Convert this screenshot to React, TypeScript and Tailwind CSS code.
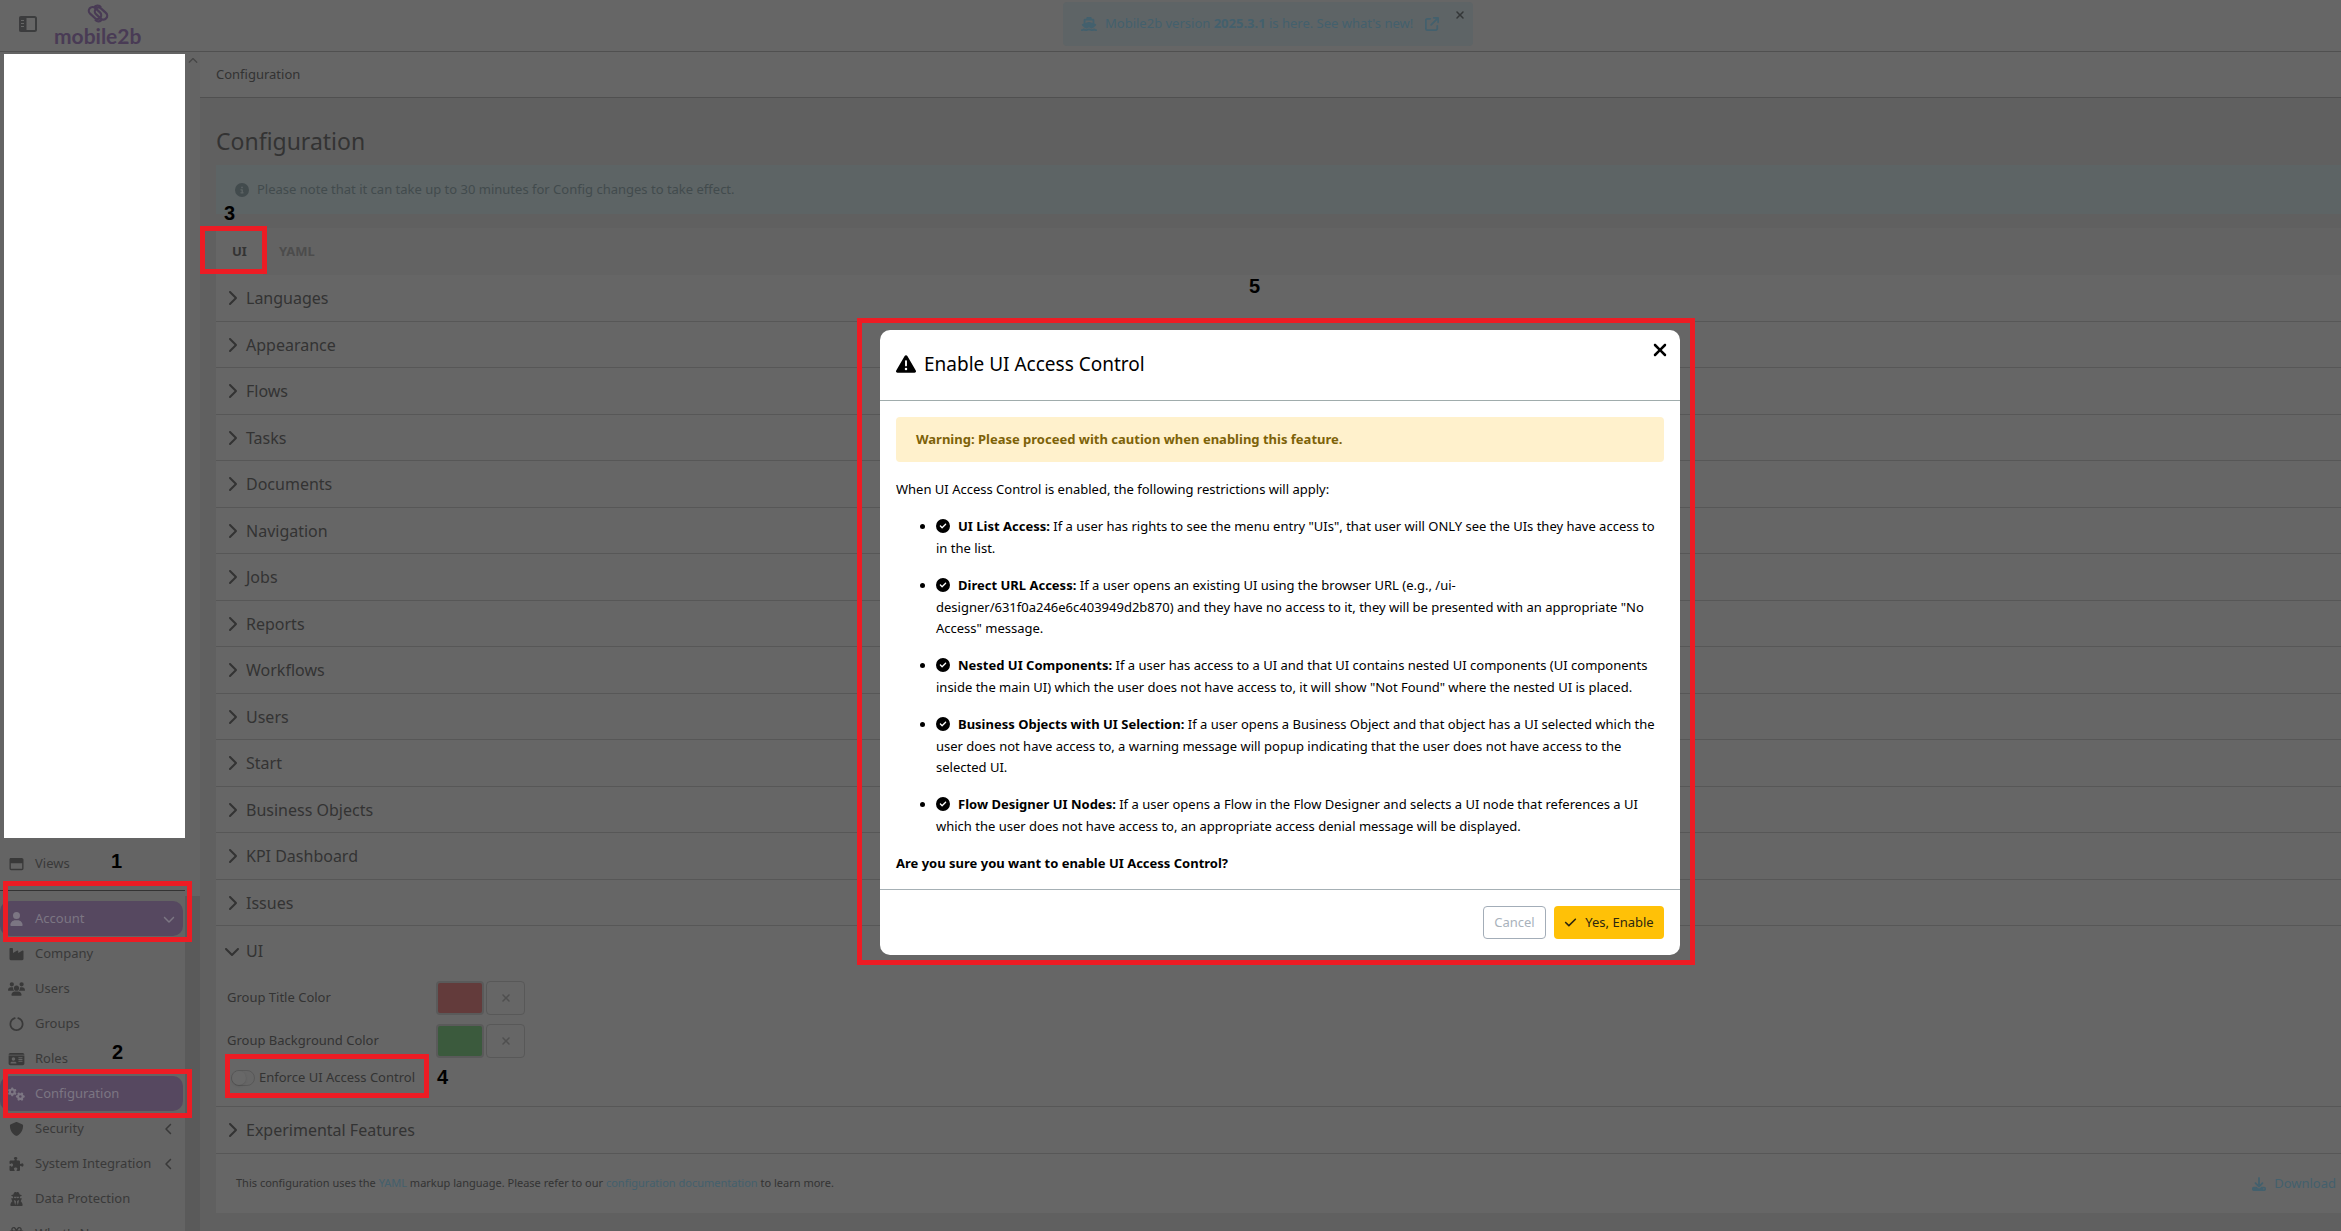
import { FaArrowUpRightFromSquare, FaCheck, FaChevronDown, FaChevronLeft, FaChevronRight, FaChevronUp, FaCircleCheck, FaCircleInfo, FaCircleNotch, FaDownload, FaGears, FaGift, FaIdCard, FaIndustry, FaPuzzlePiece, FaRegWindowMaximize, FaShield, FaShip, FaTriangleExclamation, FaUser, FaUserSecret, FaUsers, FaXmark } from "react-icons/fa6";

const menu = [
  { label: "Company", icon: FaIndustry },
  { label: "Users", icon: FaUsers },
  { label: "Groups", icon: FaCircleNotch },
  { label: "Roles", icon: FaIdCard },
  { label: "Configuration", icon: FaGears, active: true },
  { label: "Security", icon: FaShield, more: true },
  { label: "System Integration", icon: FaPuzzlePiece, more: true },
  { label: "Data Protection", icon: FaUserSecret },
  { label: "What's New", icon: FaGift },
];

const sections = [
  "Languages", "Appearance", "Flows", "Tasks", "Documents", "Navigation", "Jobs",
  "Reports", "Workflows", "Users", "Start", "Business Objects", "KPI Dashboard", "Issues",
];

const restrictions = [
  {
    title: "UI List Access:",
    text: 'If a user has rights to see the menu entry "UIs", that user will ONLY see the UIs they have access to in the list.',
  },
  {
    title: "Direct URL Access:",
    text: 'If a user opens an existing UI using the browser URL (e.g., /ui-designer/631f0a246e6c403949d2b870) and they have no access to it, they will be presented with an appropriate "No Access" message.',
  },
  {
    title: "Nested UI Components:",
    text: 'If a user has access to a UI and that UI contains nested UI components (UI components inside the main UI) which the user does not have access to, it will show "Not Found" where the nested UI is placed.',
  },
  {
    title: "Business Objects with UI Selection:",
    text: "If a user opens a Business Object and that object has a UI selected which the user does not have access to, a warning message will popup indicating that the user does not have access to the selected UI.",
  },
  {
    title: "Flow Designer UI Nodes:",
    text: "If a user opens a Flow in the Flow Designer and selects a UI node that references a UI which the user does not have access to, an appropriate access denial message will be displayed.",
  },
];

function Header() {
  return (
    <header className="flex h-[52px] shrink-0 border-b border-[#505050] bg-[#666666]">
      <div className="flex w-[195px] shrink-0 items-start">
        <button aria-label="Toggle sidebar" className="mt-4 ml-[19px] text-[#3c3d3e]">
          <svg className="h-4 w-[18px]" viewBox="0 0 18 16" fill="none" stroke="currentColor">
            <rect x="1" y="1" width="16" height="14" rx="1.500" strokeWidth="2" />
            <rect x="1" y="1" width="6" height="14" fill="currentColor" />
            <path d="M2 4.500h3M2 7.500h3M2 10.500h3" stroke="#666666" />
          </svg>
        </button>
        <a href="#" className="ml-[17px] flex flex-col items-center text-[#493b55]">
          <svg className="mt-1 h-[19px] w-6" viewBox="0 0 24 19" fill="none" stroke="currentColor" strokeWidth="2.2">
            <rect x="2" y="5.200" width="14" height="7.600" rx="3.800" transform="rotate(42 9 9)" />
            <rect x="8" y="5.800" width="14" height="7.600" rx="3.800" transform="rotate(42 15 9.600)" />
            <path d="M8 4 A4 4 0 0 1 15 3.500 M9 15.500 A4 4 0 0 0 16 15" />
          </svg>
          <span className="font-['Lato'] text-[21px] leading-[26px] font-bold">mobile2b</span>
        </a>
      </div>
      <div className="flex flex-1 justify-center pt-0.5">
        <div className="flex h-11 w-[410px] items-start rounded bg-[#5e6466] pr-[7px] pl-[18px] text-[#43606d]">
          <a href="#" className="flex h-full flex-1 items-center gap-2 whitespace-nowrap">
            <FaShip className="size-4" />
            <span className="pr-1">Mobile2b version <b>2025.3.1</b> is here. See what's new!</span>
            <FaArrowUpRightFromSquare className="size-[14px]" />
          </a>
          <button aria-label="Dismiss" className="mt-[7px] text-[#343738]"><FaXmark className="size-3" /></button>
        </div>
      </div>
    </header>
  );
}

function Sidebar() {
  return (
    <aside className="flex w-[200px] shrink-0 bg-[#646464]">
      <nav className="flex w-[185px] flex-col text-[#393939]">
        <div className="mt-0.5 ml-1 h-[784px] shrink-0 bg-white" />
        <a href="#" className="flex h-[51px] shrink-0 items-center gap-2.5 pl-2">
          <FaRegWindowMaximize className="h-[14px] w-[17px]" />Views
        </a>
        <hr className="mt-px mb-2.5 border-[#333333]" />
        <button className="mr-0.5 flex h-[35px] shrink-0 items-center gap-2.5 rounded-[10px] bg-[#564860] pr-2 pl-2 text-[#7c7683]">
          <FaUser className="h-[14px] w-[17px]" />Account
          <FaChevronDown className="ml-auto size-3" />
        </button>
        {menu.map(({ label, icon: Icon, active, more }) => (
          <a
            key={label}
            href="#"
            className={`mr-0.5 flex h-[35px] shrink-0 items-center gap-2.5 rounded-[10px] pr-2 pl-2 whitespace-nowrap ${active ? "bg-[#564860] text-[#7c7683]" : ""}`}
          >
            <Icon className="h-[14px] w-[17px] shrink-0" />
            {label}
            {more && <FaChevronLeft className="ml-auto size-3" />}
          </a>
        ))}
      </nav>
      <div className="flex flex-1 flex-col items-center">
        <FaChevronUp className="mt-1 mb-[830px] size-2.5 shrink-0 text-[#464646]" />
        <div className="w-full flex-1 bg-[#5a5a5a]" />
      </div>
    </aside>
  );
}

function ColorRow({ label, swatch }: { label: string; swatch: string }) {
  return (
    <div className="flex h-[43px] items-center">
      <span className="w-[209px]">{label}</span>
      <button aria-label={label} className={`h-[34px] w-12 rounded border-2 border-[#5a5a5a] ${swatch}`} />
      <button aria-label={`Clear ${label}`} className="ml-0.5 flex h-[34px] w-[39px] items-center justify-center rounded border border-[#585858] text-[#4f4f4f]">
        <FaXmark className="size-3" />
      </button>
    </div>
  );
}

function Modal() {
  return (
    <div className="absolute inset-0 flex items-start justify-center pt-[330px] pl-[219px]">
      <div role="dialog" aria-label="Enable UI Access Control" className="w-[800px] rounded-[10px] bg-white text-black">
        <div className="flex h-[71px] items-start border-b border-[#a0acac] px-4">
          <h2 className="mt-5 flex items-center gap-2 text-[19px] leading-7">
            <FaTriangleExclamation className="size-5" />
            Enable UI Access Control
          </h2>
          <button aria-label="Close" className="-mr-1.5 mt-2.5 ml-auto"><FaXmark className="size-5" /></button>
        </div>
        <div className="px-4 pt-4 pb-[15px] leading-[21px]">
          <div className="rounded bg-[#fff1cc] px-5 py-3 font-bold text-[#7d6208]">
            Warning: Please proceed with caution when enabling this feature.
          </div>
          <p className="mt-[17px] mb-4">When UI Access Control is enabled, the following restrictions will apply:</p>
          <ul className="list-disc pl-10">
            {restrictions.map((item) => (
              <li key={item.title} className="mb-4">
                <FaCircleCheck className="mr-2 mb-[5px] inline size-[14px] align-[-7px]" />
                <b>{item.title}</b> {item.text}
              </li>
            ))}
          </ul>
          <p className="font-bold">Are you sure you want to enable UI Access Control?</p>
        </div>
        <div className="flex justify-end gap-2 border-t border-[#a6b0b5] p-4">
          <button className="h-[33px] w-[63px] rounded border border-[#a3adb8] text-[#a9b2bc]">Cancel</button>
          <button className="flex h-[33px] w-[110px] items-center justify-center gap-2 rounded bg-[#ffc107] text-[#2c2610]">
            <FaCheck className="size-[13px]" />Yes, Enable
          </button>
        </div>
      </div>
    </div>
  );
}

function Annotations() {
  return (
    <div className="pointer-events-none absolute inset-0 font-['Liberation_Sans'] text-[20px] leading-6 font-bold text-black">
      <div className="absolute top-[881px] left-[3px] h-[61px] w-[189px] border-5 border-[#ed1c24]" />
      <div className="absolute top-[1069px] left-[3px] h-[49px] w-[189px] border-5 border-[#ed1c24]" />
      <div className="absolute top-[226px] left-[200px] h-12 w-[67px] border-5 border-[#ed1c24]" />
      <div className="absolute top-[1054px] left-[225px] h-11 w-[204px] border-5 border-[#ed1c24]" />
      <div className="absolute top-[318px] left-[857px] h-[647px] w-[838px] border-5 border-[#ed1c24]" />
      <span className="absolute top-[849px] left-[111px]">1</span>
      <span className="absolute top-[1040px] left-[112px]">2</span>
      <span className="absolute top-[201px] left-[224px]">3</span>
      <span className="absolute top-[1065px] left-[437px]">4</span>
      <span className="absolute top-[274px] left-[1249px]">5</span>
    </div>
  );
}

export default function App() {
  return (
    <div className="relative flex h-screen flex-col overflow-hidden bg-[#606060] font-['Noto_Sans',sans-serif] text-[13px] text-[#333333]">
      <Header />
      <div className="flex min-h-0 flex-1">
        <Sidebar />
        <main className="min-w-0 flex-1">
          <div className="flex h-[46px] items-center border-b border-[#505050] bg-[#666666] px-4">Configuration</div>
          <div className="pl-4">
            <h1 className="pt-[27px] pb-2 text-[23px] leading-8">Configuration</h1>
            <div className="flex h-[49px] items-center gap-2 bg-[#5d6465] px-[19px] text-[#424b4d]">
              <FaCircleInfo className="size-[14px]" />
              Please note that it can take up to 30 minutes for Config changes to take effect.
            </div>

            <div className="mt-3.5 bg-[#666666]">
              <div role="tablist" className="flex h-[47px] items-center bg-[#636363] font-bold">
                <button role="tab" aria-selected="true" className="h-full w-[47px] bg-[#666666]">UI</button>
                <button role="tab" aria-selected="false" className="h-full px-4 text-[#4c4c4c]">YAML</button>
              </div>
              {sections.map((name) => (
                <button key={name} className="flex w-full items-center gap-1.5 border-b border-[#575757] pl-2 text-[16px] odd:h-[46px] even:h-[47px]">
                  <FaChevronRight className="size-4" />{name}
                </button>
              ))}
              <section className="border-b border-[#575757] pb-3 pl-[11px]">
                <button className="-ml-[3px] flex h-[50px] items-center gap-1.5 text-[16px]">
                  <FaChevronDown className="size-4" />UI
                </button>
                <ColorRow label="Group Title Color" swatch="bg-[#633b3b]" />
                <ColorRow label="Group Background Color" swatch="bg-[#3b5a3d]" />
                <label className="flex h-8 items-center gap-1 pl-1">
                  <input type="checkbox" role="switch" className="h-4 w-6 appearance-none rounded-full border border-[#585858] before:block before:size-[14px] before:rounded-full before:bg-[#686868] before:shadow" />
                  Enforce UI Access Control
                </label>
              </section>
              <button className="flex h-[47px] w-full items-center gap-1.5 border-b border-[#575757] pl-2 text-[16px]">
                <FaChevronRight className="size-4" />Experimental Features
              </button>
              <div className="flex h-[59px] items-center justify-between pr-[5px] pl-5">
                <p className="text-[11px]">
                  This configuration uses the <a href="#" className="text-[#43606d]">YAML</a> markup language. Please refer to our <a href="#" className="text-[#43606d]">configuration documentation</a> to learn more.
                </p>
                <button className="flex items-center gap-2 text-[#43606d]">
                  <FaDownload className="size-[14px]" />Download
                </button>
              </div>
            </div>
          </div>
        </main>
      </div>
      <Modal />
      <Annotations />
    </div>
  );
}
